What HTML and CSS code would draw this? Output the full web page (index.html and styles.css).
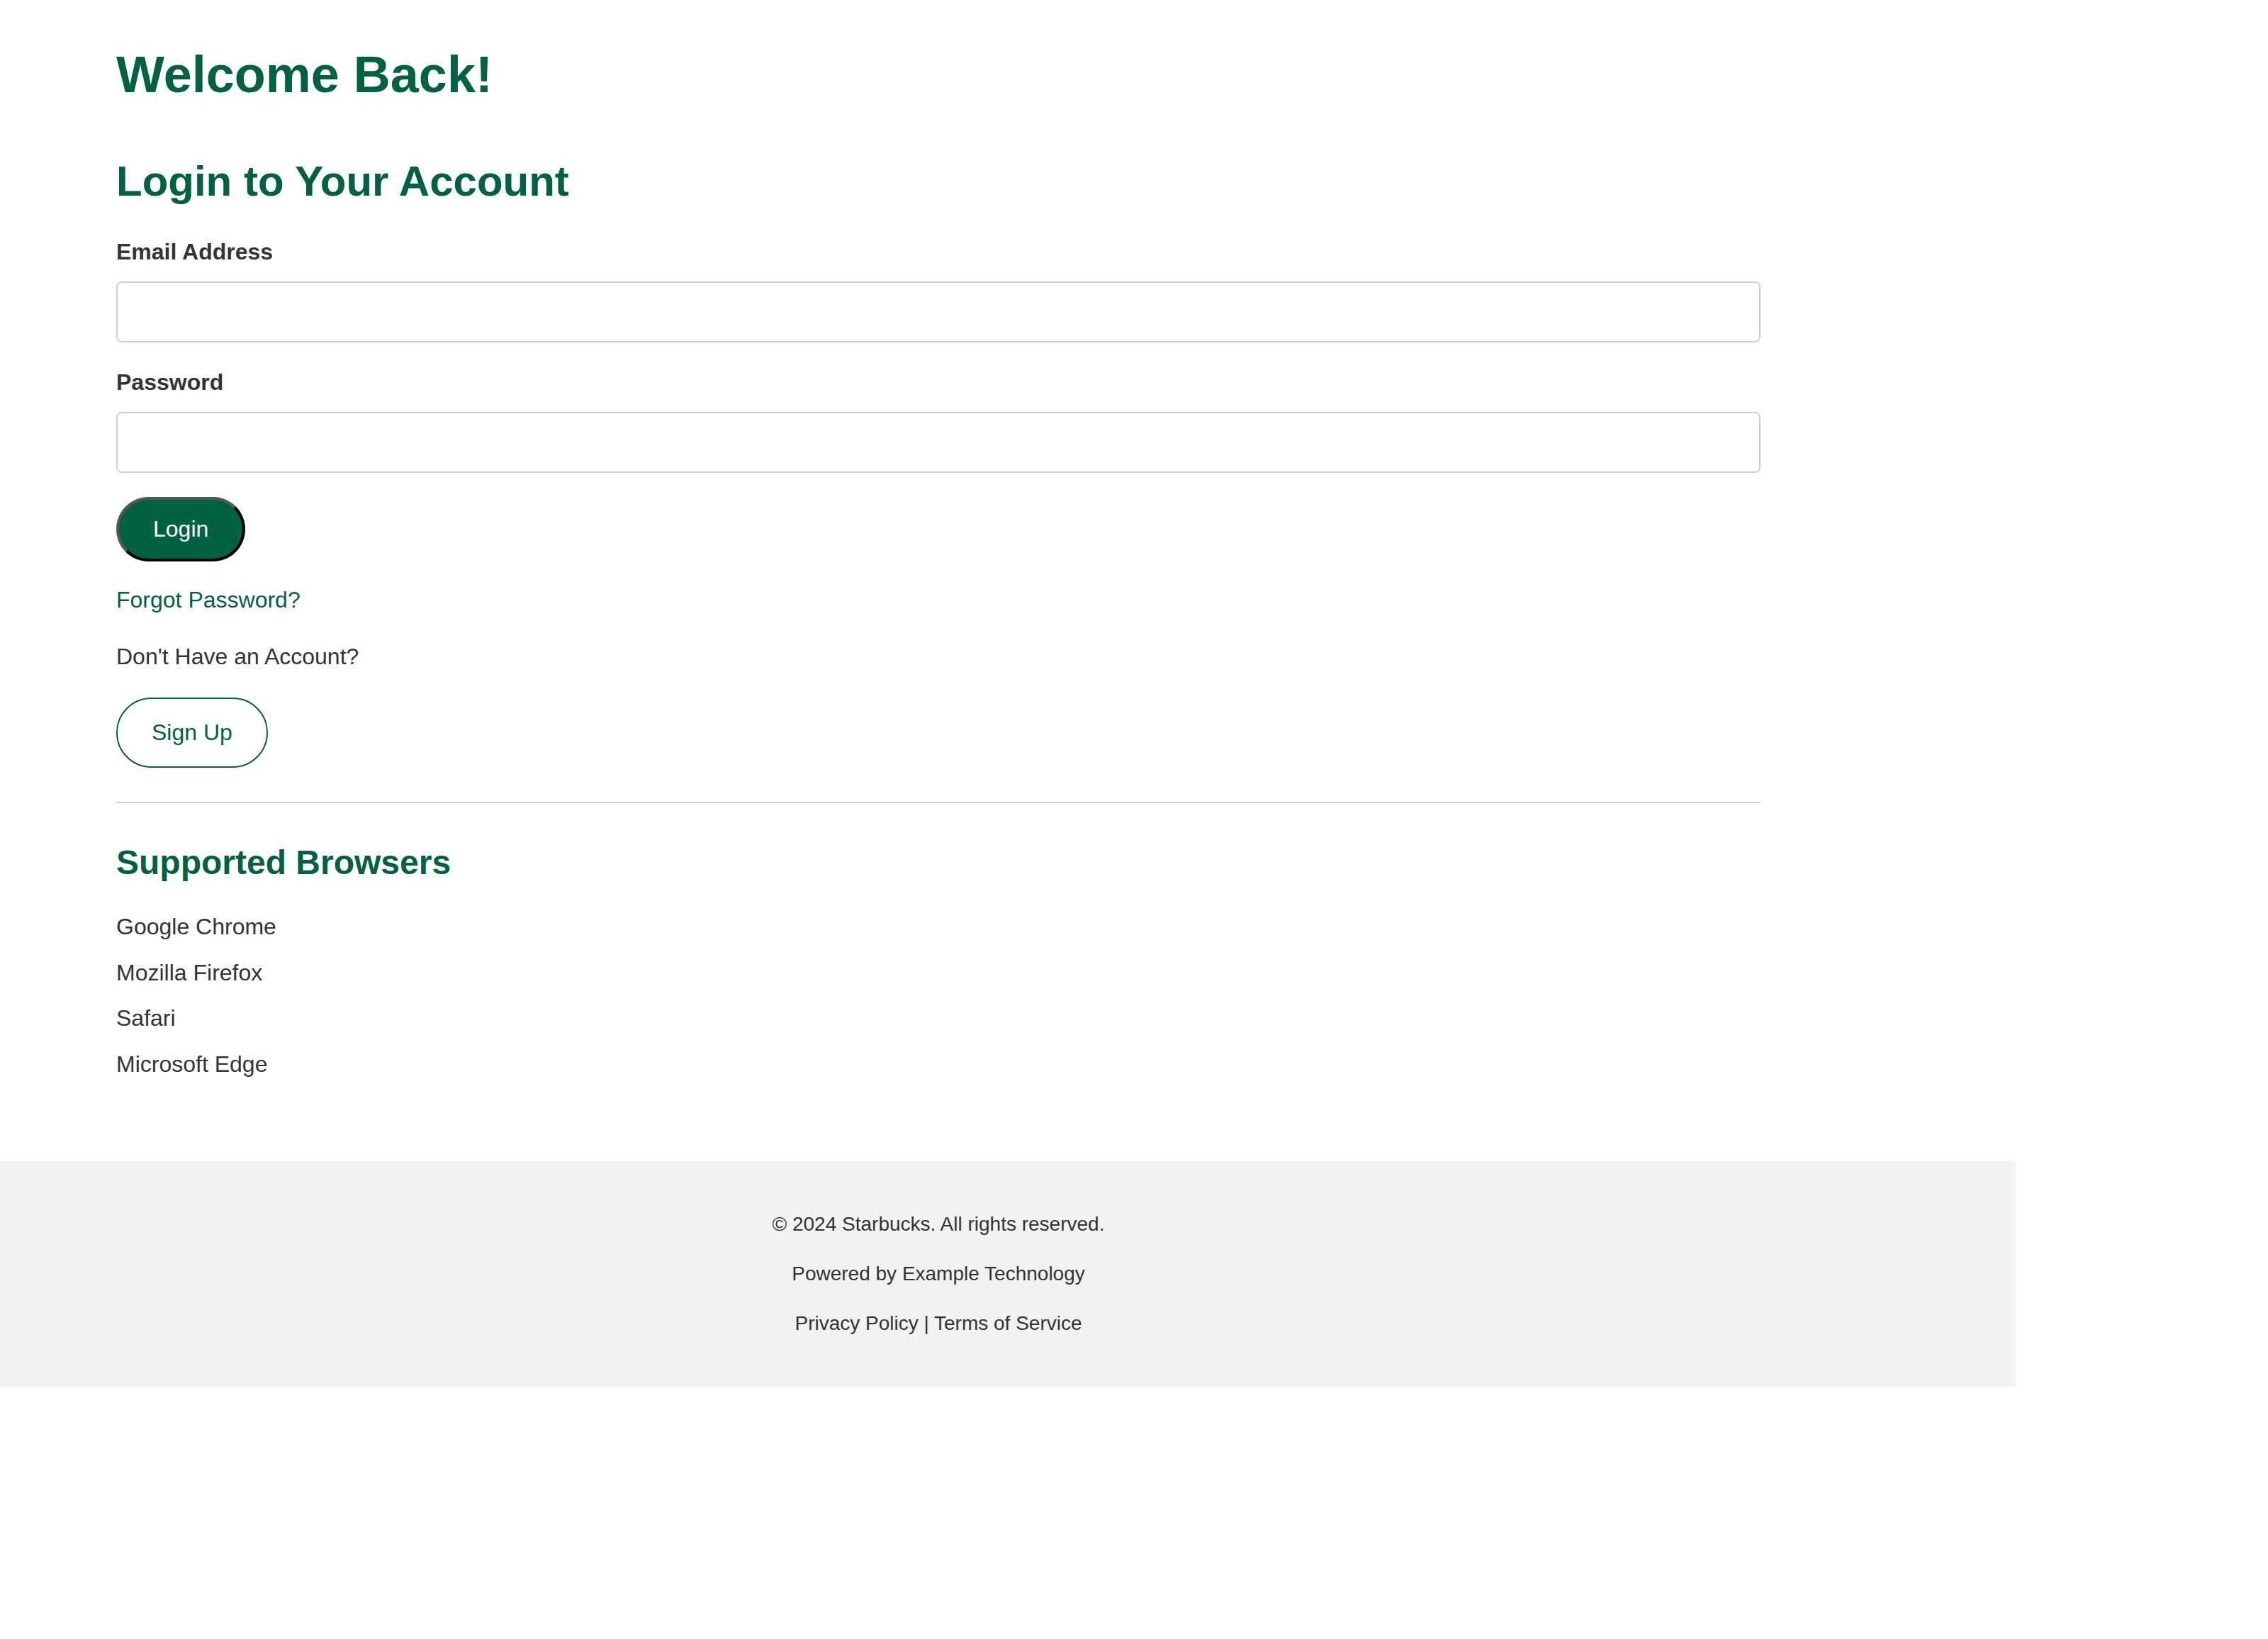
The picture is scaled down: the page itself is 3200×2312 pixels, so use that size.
FILE: index.html
```html
<!DOCTYPE html>
<html lang="en">
<head>
<meta charset="utf-8">
<title>Welcome Back! - Login</title>
<link rel="stylesheet" href="styles.css">
</head>
<body>
<main class="container">
  <h1 class="page-title">Welcome Back!</h1>
  <section class="login">
    <h2 class="section-title">Login to Your Account</h2>
    <form class="login-form">
      <label class="field-label" for="email">Email Address</label>
      <input class="field-input" id="email" type="email">
      <label class="field-label field-label-next" for="password">Password</label>
      <input class="field-input" id="password" type="password">
      <button class="btn-login" type="button">Login</button>
    </form>
    <a class="forgot-link" href="#">Forgot Password?</a>
    <p class="no-account">Don't Have an Account?</p>
    <a class="btn-signup" href="#">Sign Up</a>
  </section>
  <hr class="divider">
  <section class="browsers">
    <h3 class="browsers-title">Supported Browsers</h3>
    <ul class="browser-list">
      <li>Google Chrome</li>
      <li>Mozilla Firefox</li>
      <li>Safari</li>
      <li>Microsoft Edge</li>
    </ul>
  </section>
</main>
<footer class="site-footer">
  <div class="footer-inner">
    <p>&copy; 2024 Starbucks. All rights reserved.</p>
    <p>Powered by Example Technology</p>
    <p><a href="#">Privacy Policy</a> | <a href="#">Terms of Service</a></p>
  </div>
</footer>
</body>
</html>
```

FILE: styles.css
```css
html, body {
  margin: 0;
  padding: 0;
  background: #ffffff;
}

body {
  font-family: "Liberation Sans", Arial, Helvetica, sans-serif;
  font-size: 32px;
  line-height: 48px;
  color: #333333;
}

.container {
  width: 2320px;
  margin-left: 164px;
  padding-top: 62px;
  padding-bottom: 113px;
}

.page-title {
  margin: 0;
  font-size: 72px;
  line-height: 86px;
  font-weight: 700;
  color: #006241;
}

.login {
  display: flex;
  flex-direction: column;
  align-items: flex-start;
}

.section-title {
  margin: 72px 0 0;
  font-size: 60px;
  line-height: 72px;
  font-weight: 700;
  color: #006241;
}

.login-form {
  margin-top: 39px;
  display: flex;
  flex-direction: column;
  align-items: flex-start;
  align-self: stretch;
}

.field-label {
  display: block;
  font-weight: 700;
  font-size: 32px;
  line-height: 48px;
  color: #333333;
}

.field-label-next {
  margin-top: 32px;
}

.field-input {
  align-self: stretch;
  box-sizing: border-box;
  margin: 18px 0 0;
  height: 86px;
  padding: 0 20px;
  border: 2px solid #d0d0d0;
  border-radius: 8px;
  background: #ffffff;
  font-family: inherit;
  font-size: 32px;
  outline: none;
}

.btn-login {
  margin-top: 34px;
  padding: 23px 48px;
  font-family: inherit;
  font-size: 32px;
  line-height: 37px;
  color: #ffffff;
  background: #006241;
  border: 4px solid;
  border-color: #555555 #000000 #000000 #555555;
  border-radius: 60px;
  cursor: pointer;
}

.forgot-link {
  margin-top: 30px;
  color: #006241;
  text-decoration: none;
  line-height: 48px;
}

.no-account {
  margin: 32px 0 0;
  line-height: 48px;
}

.btn-signup {
  margin-top: 34px;
  padding: 29px 48px;
  font-size: 32px;
  line-height: 37px;
  color: #006241;
  background: #ffffff;
  border: 2px solid #006241;
  border-radius: 60px;
  text-decoration: none;
}

.divider {
  margin: 48px 0 0;
  height: 0;
  border: 0;
  border-top: 2px solid #d0d0d0;
}

.browsers-title {
  margin: 55px 0 0;
  font-size: 48px;
  line-height: 58px;
  font-weight: 700;
  color: #006241;
}

.browser-list {
  list-style: none;
  margin: 37px 0 0;
  padding: 0;
  display: flex;
  flex-direction: column;
  gap: 16.5px;
}

.browser-list li {
  line-height: 48px;
}

.site-footer {
  width: 2844px;
  background: #f2f2f2;
  padding: 40px 0;
}

.footer-inner {
  width: 2320px;
  margin-left: 164px;
  text-align: center;
  font-size: 28px;
  line-height: 42px;
  color: #333333;
}

.footer-inner p {
  margin: 28px 0;
}

.footer-inner a {
  color: #333333;
  text-decoration: none;
}
```
